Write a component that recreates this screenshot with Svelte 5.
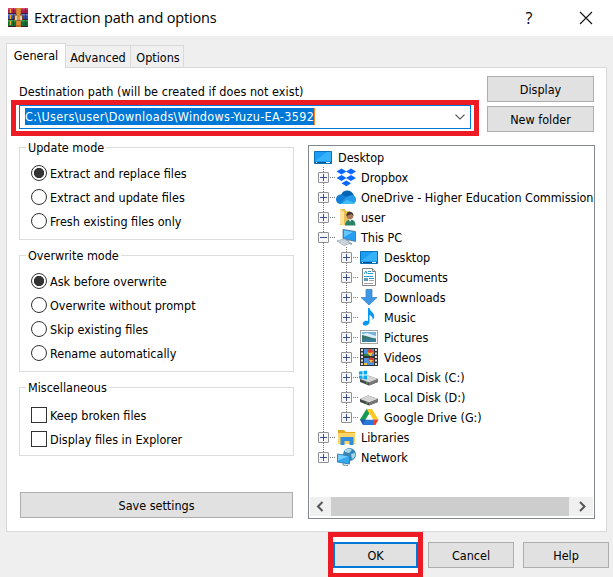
<script lang="ts">
  type TreeNode = { label: string; icon: string; depth: number; open?: boolean; last?: boolean };

  let updateMode = 'Extract and replace files';
  let overwriteMode = 'Ask before overwrite';
  let destination = 'C:\\Users\\user\\Downloads\\Windows-Yuzu-EA-3592';
  let activeTab = 'General';

  const tabs = ['General', 'Advanced', 'Options'];
  const updateModes = ['Extract and replace files', 'Extract and update files', 'Fresh existing files only'];
  const overwriteModes = [
    'Ask before overwrite',
    'Overwrite without prompt',
    'Skip existing files',
    'Rename automatically',
  ];
  const miscOptions = ['Keep broken files', 'Display files in Explorer'];

  const nodes: TreeNode[] = [
    { label: 'Desktop', icon: 'desktop', depth: 0 },
    { label: 'Dropbox', icon: 'dropbox', depth: 1 },
    { label: 'OneDrive - Higher Education Commission', icon: 'onedrive', depth: 1 },
    { label: 'user', icon: 'user', depth: 1 },
    { label: 'This PC', icon: 'pc', depth: 1, open: true },
    { label: 'Desktop', icon: 'desktop', depth: 2 },
    { label: 'Documents', icon: 'documents', depth: 2 },
    { label: 'Downloads', icon: 'downloads', depth: 2 },
    { label: 'Music', icon: 'music', depth: 2 },
    { label: 'Pictures', icon: 'pictures', depth: 2 },
    { label: 'Videos', icon: 'videos', depth: 2 },
    { label: 'Local Disk (C:)', icon: 'disk-c', depth: 2 },
    { label: 'Local Disk (D:)', icon: 'disk', depth: 2 },
    { label: 'Google Drive (G:)', icon: 'gdrive', depth: 2, last: true },
    { label: 'Libraries', icon: 'libraries', depth: 1 },
    { label: 'Network', icon: 'network', depth: 1, last: true },
  ];
</script>

<div class="dialog">
  <header class="titlebar">
    <svg class="app-icon" width="20" height="19" viewBox="0 0 20 19">
      <rect width="20" height="6" fill="#a91e52" />
      <rect width="20" height="1.5" fill="#d94a6a" />
      <rect y="6" width="20" height="6" fill="#3347a5" />
      <rect y="6" width="20" height="1.5" fill="#6e79d0" />
      <rect y="12" width="20" height="6.5" fill="#156b36" />
      <rect y="12" width="20" height="1.5" fill="#3f9c48" />
      <path d="M0 5.5h20M0 11.5h20M0 18.5h20" stroke="#382038" />
      <path d="M2.5 1v4M2.5 7v4M2.5 13v4" stroke="#e8b22c" stroke-width="1.5" />
      <path d="M5.5 0v18M17.5 0v18" stroke="#271d45" stroke-opacity=".45" />
      <rect x="8" width="5" height="19" fill="#b96b20" />
      <path d="M8.5 1h4M8.5 3h4M8.5 5h4M8.5 14h4M8.5 16h4" stroke="#f6b44c" />
      <rect x="6.5" y="7" width="8" height="5" rx="1" fill="#d8c7a3" stroke="#654530" />
      <rect x="9" y="6" width="3" height="6" fill="#e58d29" />
      <path d="M8 10.5v2M13 10.5v2" stroke="#fff" />
    </svg>
    <h1>Extraction path and options</h1>
    <button class="caption help" type="button" aria-label="Help topics">?</button>
    <button class="caption" type="button" aria-label="Close">
      <svg width="14" height="14" viewBox="0 0 14 14">
        <path d="M1 1l12 12M13 1L1 13" stroke="#111" stroke-width="1.1" />
      </svg>
    </button>
  </header>

  <div class="tabs">
    {#each tabs as tab}
      <button class="tab" class:is-active={activeTab === tab} type="button" on:click={() => (activeTab = tab)}>{tab}</button>
    {/each}
  </div>

  <section class="panel">
    <div class="top-row">
      <div class="destination">
        <span class="destination-label">Destination path (will be created if does not exist)</span>
        <div class="combo">
          <span class="selection">{destination}</span>
          <svg width="10" height="6" viewBox="0 0 10 6">
            <path d="M.5.7L5 5.1 9.5.7" fill="none" stroke="#444" stroke-width="1.1" />
          </svg>
          <div class="marker"></div>
        </div>
      </div>
      <div class="side-buttons">
        <button class="button" type="button">Display</button>
        <button class="button" type="button">New folder</button>
      </div>
    </div>

    <div class="main-row">
      <div class="options">
        <fieldset>
          <legend>Update mode</legend>
          {#each updateModes as mode}
            <label><input type="radio" bind:group={updateMode} value={mode} /><span>{mode}</span></label>
          {/each}
        </fieldset>
        <fieldset>
          <legend>Overwrite mode</legend>
          {#each overwriteModes as mode}
            <label><input type="radio" bind:group={overwriteMode} value={mode} /><span>{mode}</span></label>
          {/each}
        </fieldset>
        <fieldset class="misc">
          <legend>Miscellaneous</legend>
          {#each miscOptions as option}
            <label><input type="checkbox" /><span>{option}</span></label>
          {/each}
        </fieldset>
        <button class="button save" type="button">Save settings</button>
      </div>

      <div class="tree">
        <div class="nodes">
          {#each nodes as node}
            <div class="node">
              {#if node.depth === 2}
                <svg class="guide" viewBox="0 0 23 20"><path class="dots" d="M11.5 0v20" /></svg>
              {/if}
              {#if node.depth > 0}
                <svg class="guide" viewBox="0 0 23 20">
                  <path class="dots" d={node.last ? 'M11.5 0v10' : 'M11.5 0v20'} />
                  <path class="dots" d="M18 10.5h6" />
                  <rect x="6.5" y="5.5" width="10" height="10" rx=".5" fill="#f7f7f7" stroke="#919191" />
                  <path d={node.open ? 'M8 10.5h7' : 'M8 10.5h7M11.5 7v7'} stroke="#3b4f91" />
                </svg>
              {/if}
              <svg class="icon" viewBox="0 0 19 20">
                {#if node.icon === 'desktop'}
                  <path d="M.5 4.5h17v12H.5z" fill="#1a9df4" stroke="#0873ba" />
                  <path d="M1 14L13 5h4v9z" fill="#38b1fb" />
                  <path d="M1 15.5h16" stroke="#065489" />
                  <path d="M2 15.5h1M12 15.5h4" stroke="#e9f7ff" />
                {:else if node.icon === 'dropbox'}
                  <path d="M4.500 1.500l5 3-5 3-5-3zM14 1.500l5 3-5 3-5-3zM4.500 8l5 3-5 3-5-3zM14 8l5 3-5 3-5-3zM9.300 13.500l4.700 2.800-4.700 2.900-4.700-2.900z" fill="#0868ff" />
                {:else if node.icon === 'onedrive'}
                  <path d="M4 8c2-6 11-6 13 1l-7 5z" fill="#0864b5" />
                  <path d="M4.400 17A4.500 4.500 0 0 1-1 12.500c0-4 4-6 7-4.500l9 6z" fill="#1380d8" />
                  <path d="M9 10l4-1.500c4-1 6.500 1.500 6 5-.4 2.300-2 3.500-4 3.500H4z" fill="#239bea" />
                  <path d="M3.500 17l6.500-4 8 3q-1 1-3 1z" fill="#42bdf3" />
                {:else if node.icon === 'user'}
                  <path d="M3 2h5l1 2h4v14H3z" fill="#e8bf54" />
                  <path d="M3 2l4 3v14l-4-2z" fill="#ffe39a" />
                  <path d="M8 18.500q.5-6 5.500-6t5 6z" fill="#2c8065" />
                  <path d="M11.500 12l1.500 3 2-3z" fill="#dce9e4" />
                  <circle cx="13" cy="8.800" r="3.400" fill="#a9785c" />
                  <path d="M9.500 9c-1-5 7-6 7 0l-2-2z" fill="#47372f" />
                {:else if node.icon === 'pc'}
                  <path d="M6 2.500l12.500 2v10l-12.500-3z" fill="#269ff0" stroke="#406e91" stroke-width=".8" />
                  <path d="M7 3.500l9 1.500-9 5z" fill="#65c7ff" />
                  <path d="M11 13v3l4 1" fill="none" stroke="#8095a3" stroke-width="1.500" />
                  <path d="M0 14l7-2 7 4-7 2.500z" fill="#dce3e8" stroke="#98a6af" stroke-width=".8" />
                  <path d="M2 14l8 3M5 13l7 3" stroke="#9facb5" stroke-width=".6" />
                {:else if node.icon === 'documents'}
                  <path d="M2.500 1.500h10l3 3v14h-13z" fill="#fff" stroke="#838383" />
                  <path d="M12.500 1.500v3h3" fill="#ddd" stroke="#838383" />
                  <path d="M4 7l2-3 1 3M8 4.500h3M8 6.500h5M4 9.500h9M9 11.500h5" fill="none" stroke="#269bd5" />
                  <rect x="4" y="11" width="4" height="3" fill="#579bb6" />
                  <path d="M9 13.500h5M4 16.500h9" stroke="#a3a3a3" />
                {:else if node.icon === 'downloads'}
                  <path d="M6 2.500h6v8h5L9 18 1 10.500h5z" fill="#3c97e4" stroke="#2d7cc1" stroke-width=".7" />
                {:else if node.icon === 'music'}
                  <path d="M8 1h1.500c.5 4 6 4.500 4.500 10l-1.500 2c.5-3-1-4-3-5v7c0 3-5 5-6.500 2.500C2 15 5 13 8 14z" fill="#0799f2" />
                {:else if node.icon === 'pictures'}
                  <rect x=".5" y="3.500" width="17" height="13" fill="#fff" stroke="#a5a5a5" />
                  <rect x="2" y="5" width="14" height="10" fill="#70b3df" />
                  <path d="M2 7l5-1 9 3v2H2z" fill="#dceef8" />
                  <path d="M2 8l4 1 10 3v3H2z" fill="#3b7669" />
                  <path d="M2 13q6-2 14 0v2H2z" fill="#397fa9" />
                {:else if node.icon === 'videos'}
                  <rect y="1" width="18" height="18" fill="#333" />
                  <path d="M2 2v17M16 2v17" stroke="#ddd" stroke-width="2" stroke-dasharray="2 1.500" />
                  <path d="M4 2h10v7H4zM4 11h10v7H4z" fill="#4a93df" />
                  <circle cx="10" cy="5" r="3" fill="#df452c" />
                  <path d="M7 5q3 2 6 0l-2 4H9z" fill="#e9cf37" />
                  <path d="M4 7q4-1 6 2H4z" fill="#357e4b" />
                  <circle cx="11" cy="13" r="2.500" fill="#d73c2c" />
                  <path d="M9 13h4l-2 3zM4 16h3v2H4z" fill="#efc33d" />
                {:else if node.icon === 'disk' || node.icon === 'disk-c'}
                  <path d="M0 12l8-3.500L18 12v3L9 18.500 0 15z" fill="#444a4c" />
                  <path d="M0 12l8-3.500L18 12l-9 3.500z" fill="#d5d5d5" />
                  <path d="M9 15.500l9-3.500v3l-9 3.500z" fill="#777" />
                  <circle cx="7" cy="16" r=".7" fill="#5be365" />
                  {#if node.icon === 'disk-c'}
                    <path d="M-1 4.500l3.500-.5v3.500H-1zM3.500 4L7 3.500v4H3.500zM-1 8.500h3.500V12l-3.500-.5zM3.500 8.500H7v4L3.500 12z" fill="#08a9ed" />
                  {/if}
                {:else if node.icon === 'gdrive'}
                  <path d="M6.500 2h3v5L3 18 0 12.500z" fill="#159b53" />
                  <path d="M6.500 2H12l6.500 10.500H13z" fill="#ffc928" />
                  <path d="M5.500 12.500H13V18H3z" fill="#2878df" />
                  <path d="M13 12.500h5.500l-3 5.500H13z" fill="#e84331" />
                  <path d="M0 12.500h5.500L3 18z" fill="#2457bf" />
                  <path d="M9.300 6.500l3.700 6H5.500z" fill="#fff" />
                {:else if node.icon === 'libraries'}
                  <path d="M1 3h6l2 2h9v12H1z" fill="#e8a821" />
                  <path d="M1 6h17v11H1z" fill="#ffd568" />
                  <path d="M3.500 18v-8h13v8h-4v-4h-5v4z" fill="#338ddd" />
                {:else if node.icon === 'network'}
                  <circle cx="12.500" cy="7.500" r="6.500" fill="#3686b5" />
                  <path d="M8 3q5-3 7 0l-3 3-4-1zM14 7l4-1q1 4-3 6z" fill="#a9d9e9" />
                  <path d="M.5 7l12 2v8l-12-2z" fill="#34a8ef" stroke="#3683b8" />
                  <path d="M1 7.500l10 2-10 4z" fill="#73ceff" />
                  <path d="M6 16v2l5 .5" fill="none" stroke="#718c9c" />
                {/if}
              </svg>
              <span class="node-label">{node.label}</span>
            </div>
          {/each}
        </div>
        <div class="scrollbar">
          <svg width="21" height="19" viewBox="0 0 21 19"><path d="M12.500 5L8 9.500l4.500 4.500" /></svg>
          <div class="thumb"></div>
          <svg width="24" height="19" viewBox="0 0 24 19"><path d="M11 5l4.500 4.500L11 14" /></svg>
        </div>
      </div>
    </div>
  </section>

  <footer>
    <div class="ok-wrap">
      <button class="button ok" type="button">OK</button>
      <div class="marker ok-marker"></div>
    </div>
    <button class="button" type="button">Cancel</button>
    <button class="button" type="button">Help</button>
  </footer>
</div>

<style>
  :global(body) {
    margin: 0;
    overflow: hidden;
  }

  .dialog {
    width: 613px;
    height: 577px;
    overflow: hidden;
    background: #efefef;
    color: #000;
    font-family: 'DejaVu Sans Condensed', 'DejaVu Sans', sans-serif;
    font-stretch: condensed;
    font-size: 12.5px;
    line-height: 17px;
  }

  button {
    padding: 0;
    font: inherit;
    color: inherit;
  }

  .titlebar {
    display: flex;
    align-items: center;
    height: 36px;
    padding-left: 8px;
    background: #fff;
  }

  .app-icon {
    margin-top: -2px;
  }

  h1 {
    flex: 1;
    margin: -1px 0 0 6px;
    font-family: 'Open Sans', 'Noto Sans', sans-serif;
    font-stretch: normal;
    font-size: 14.5px;
    font-weight: 400;
    letter-spacing: -0.18px;
  }

  .caption {
    display: grid;
    place-items: center;
    width: 57px;
    height: 34px;
    border: 0;
    background: none;
  }

  .caption:last-child {
    padding-left: 2px;
  }

  .caption.help {
    padding-left: 3px;
    font-family: 'Open Sans', sans-serif;
    font-stretch: normal;
    font-size: 16px;
  }

  .tabs {
    display: flex;
    align-items: flex-end;
    height: 24px;
    padding: 7px 0 0 6px;
  }

  .tab {
    box-sizing: border-box;
    width: 65px;
    height: 22px;
    padding-top: 1px;
    border: 1px solid #d9d9d9;
    border-width: 1px 1px 0 0;
    background: #f0f0f0;
  }

  .tab:last-child {
    width: 53px;
    padding-left: 2px;
  }

  .tab.is-active {
    position: relative;
    width: 60px;
    height: 25px;
    margin-bottom: -1px;
    padding: 0 0 2px;
    border-left-width: 1px;
    background: #fff;
  }

  .panel {
    box-sizing: border-box;
    width: 601px;
    height: 465px;
    margin-left: 6px;
    padding: 8px 11px 0 12px;
    border: 1px solid #d9d9d9;
    background: #fff;
  }

  .top-row {
    display: flex;
    gap: 16px;
    height: 63px;
  }

  .destination {
    width: 452px;
    padding-top: 7px;
  }

  .destination-label {
    display: block;
    height: 22px;
    letter-spacing: 0.05px;
    white-space: nowrap;
  }

  .combo {
    position: relative;
    box-sizing: border-box;
    display: flex;
    align-items: center;
    justify-content: space-between;
    height: 24px;
    padding: 0 5px;
    border: 1px solid #0078d7;
  }

  .selection {
    height: 17px;
    margin-top: -1px;
    border-right: 1px solid #ff8728;
    background: #0078d7;
    color: #fff;
    letter-spacing: 0.34px;
    line-height: 17px;
    white-space: nowrap;
  }

  .marker {
    position: absolute;
    inset: -6px -9px -8px;
    border: 5px solid #ed1c24;
    pointer-events: none;
  }

  .side-buttons {
    display: flex;
    flex-direction: column;
    gap: 4px;
    width: 107px;
  }

  .button {
    box-sizing: border-box;
    height: 26px;
    border: 1px solid #adadad;
    border-radius: 0;
    background: #e1e1e1;
  }

  .main-row {
    display: flex;
    gap: 14px;
  }

  .options {
    display: flex;
    flex-direction: column;
    gap: 7px;
    width: 275px;
  }

  fieldset {
    box-sizing: border-box;
    min-width: 0;
    height: 101px;
    margin: 0;
    padding: 5px 11px 0;
    border: 1px solid #dcdcdc;
  }

  fieldset:nth-child(2) {
    height: 125px;
  }

  fieldset.misc {
    height: 77px;
    padding-top: 7px;
  }

  legend {
    height: 17px;
    margin-left: -5px;
    padding: 0 2px;
  }

  label {
    display: flex;
    align-items: center;
    gap: 3px;
    height: 24px;
  }

  input {
    box-sizing: border-box;
    width: 16px;
    height: 16px;
    margin: 0;
    border: 1px solid #333;
    background: #fff;
    appearance: none;
  }

  input[type='radio'] {
    border-radius: 50%;
  }

  input[type='radio']:checked {
    background: radial-gradient(circle, #333 4.8px, #fff 5.4px);
  }

  .save {
    margin: 29px 1px 0;
  }

  .tree {
    box-sizing: border-box;
    display: flex;
    flex-direction: column;
    width: 287px;
    height: 374px;
    margin-top: 6px;
    padding: 1px 0 1px 1px;
    border: 1px solid #828790;
  }

  .nodes {
    flex: 1;
    overflow: hidden;
    padding-left: 2px;
  }

  .node {
    display: flex;
    height: 20px;
  }

  .guide {
    flex: 0 0 23px;
    height: 20px;
    overflow: visible;
  }

  .dots {
    fill: none;
    stroke: #777;
    stroke-dasharray: 1 1;
  }

  .icon {
    flex: 0 0 19px;
    height: 20px;
    margin: 0 5px 0 2px;
    overflow: visible;
  }

  .node-label {
    letter-spacing: -0.02px;
    line-height: 21px;
    white-space: nowrap;
  }

  .scrollbar {
    display: flex;
    height: 19px;
    margin: 0 1px 1px 0;
    background: #f0f0f0;
  }

  .scrollbar path {
    fill: none;
    stroke: #555;
    stroke-width: 2;
  }

  .thumb {
    flex: 1;
    background: #cdcdcd;
  }

  footer {
    display: flex;
    gap: 9px;
    padding: 10px 0 0 333px;
  }

  footer > .button {
    width: 86px;
  }

  .ok-wrap {
    position: relative;
    width: 85px;
    margin-right: 1px;
    height: 26px;
    box-shadow: 0 -5px #fff, 0 5px #fff;
  }

  .ok {
    width: 100%;
    border: 2px solid #0078d7;
  }

  .ok-marker {
    inset: -10px -5px;
  }
</style>
